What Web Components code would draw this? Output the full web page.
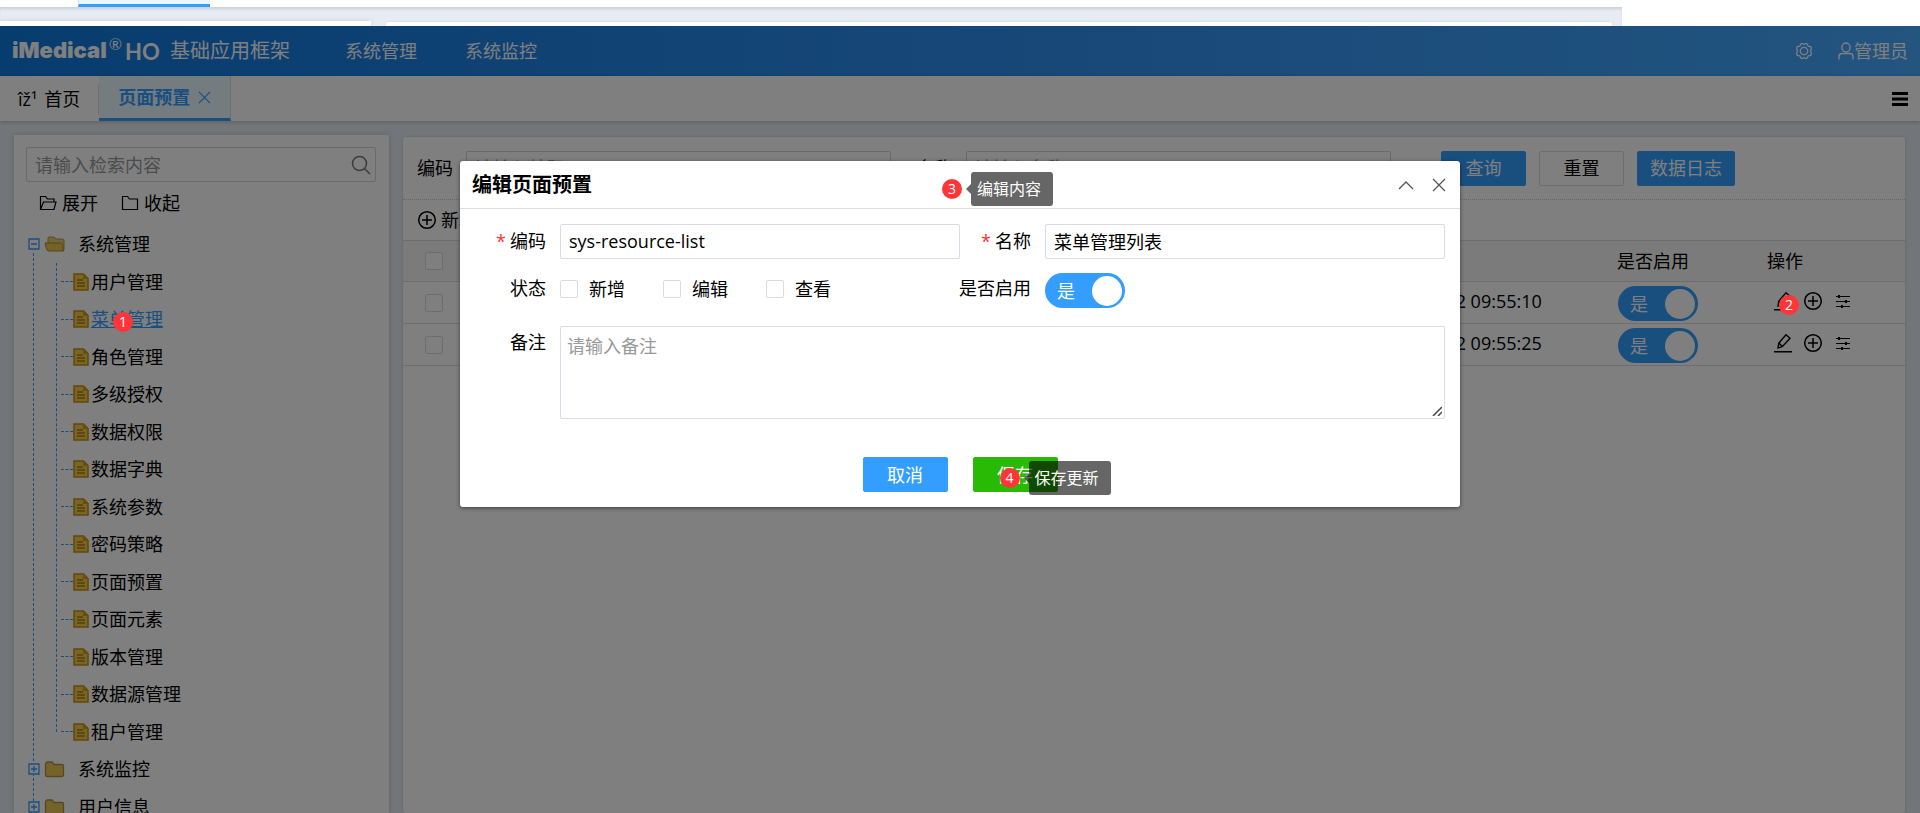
<!DOCTYPE html>
<html lang="zh-CN">
<head>
<meta charset="utf-8">
<title>基础应用框架</title>
<style>
  html, body { height: 100%; margin: 0; }
  body {
    background: #fff; color: #000; overflow: hidden;
    font: 18px/24px "Open Sans", "Noto Sans CJK SC", sans-serif;
  }
</style>
</head>
<body>
<framework-page></framework-page>

<script>
const define = (name, html, setup) => {
  const tpl = document.createElement('template');
  tpl.innerHTML = `<style>*,*::before,*::after{box-sizing:border-box}button,input,textarea{font:inherit;color:inherit;margin:0}a{color:inherit;text-decoration:none}</style>` + html;
  customElements.define(name, class extends HTMLElement {
    constructor() {
      super();
      this.attachShadow({ mode: 'open' }).appendChild(tpl.content.cloneNode(true));
    }
    connectedCallback() { if (setup) setup(this, this.shadowRoot); }
  });
};

/* Icons */
const ICONS = {
  gear: ['0 0 18 18', '<g fill="none" stroke="currentColor" stroke-width="1.3"><path d="M6.2 1.6h1.6l1.2.9 1.2-.9h1.6l1.5 2.6 2.3.4.8 1.4-.5 1.5v3l.5 1.500-.8 1.400-2.300.4-1.500 2.600h-1.600L9 15.500l-1.200.9H6.200l-1.500-2.600-2.300-.4-.8-1.400.5-1.500v-3l-.5-1.500.8-1.400 2.300-.4z"/><circle cx="9" cy="9" r="3.700"/></g>'],
  user: ['0 0 16 18', '<g fill="none" stroke="currentColor" stroke-width="1.400"><rect x="4" y="1" width="8" height="9" rx="4"/><path d="M1 17.500v-3c0-2 1.300-3 3-3h8c1.700 0 3 1 3 3v3"/></g>'],
  menu: ['0 0 18 18', '<path fill="currentColor" d="M1 2h16v3H1zM1 7.500h16v3H1zM1 13h16v3H1z"/>'],
  close: ['0 0 14 14', '<path d="M1 1l12 12M13 1L1 13" fill="none" stroke="currentColor" stroke-width="1.300"/>'],
  up: ['0 0 16 14', '<path d="M1 11l7-7 7 7" fill="none" stroke="currentColor" stroke-width="1.300"/>'],
  search: ['0 0 20 20', '<g fill="none" stroke="currentColor" stroke-width="1.500"><circle cx="8.500" cy="8.500" r="7"/><path d="M13.500 13.500l5.500 5.500"/></g>'],
  folderOpen: ['0 0 18 18', '<path d="M1.500 15.500V2.500h5l2 2.500h6.500v3M1.500 15.500L4.500 8h12.500l-2 7.500z" fill="none" stroke="currentColor" stroke-width="1.200"/>'],
  folder: ['0 0 18 18', '<path d="M1.500 15.500V2.500h5l2 2.500h8v10.500z" fill="none" stroke="currentColor" stroke-width="1.200"/>'],
  plus: ['0 0 20 20', '<g fill="none" stroke="currentColor" stroke-width="1.500"><circle cx="10" cy="10" r="8.300"/><path d="M10 5v10M5 10h10"/></g>'],
  pencil: ['0 0 20 20', '<path d="M1 18.700h18M5 15l.8-5L13 1.800l4 3.400L9.500 13.500zM5.800 10l3.700 3.500" fill="none" stroke="currentColor" stroke-width="1.400"/>'],
  sliders: ['0 0 20 20', '<path d="M3 5.500h14M3 10.500h14M3 15.500h14" stroke="currentColor" stroke-width="1.200"/><path fill="currentColor" d="M5 4h2v3H5zM12 9h2v3h-2zM8 14h2v3H8z"/>'],
  minusBox: ['0 0 12 12', '<path d="M1 1h10v10H1zM3 6h6" fill="none" stroke="#339eff" stroke-width="1.300"/>'],
  plusBox: ['0 0 12 12', '<path d="M1 1h10v10H1zM3 6h6M6 3v6" fill="none" stroke="#339eff" stroke-width="1.300"/>'],
  dirOpen: ['0 0 22 18', '<path d="M4 8V3q0-1 1-1h5l2 2h6q2 0 2 2v9z" fill="#e6cd72" stroke="#b59438"/><path d="M1 8h15.500q1.500 0 2 1.500L19.500 16H5q-2 0-2.500-2z" fill="#e9c44f" stroke="#ad8a32"/>'],
  dirClosed: ['0 0 22 18', '<path d="M1.500 5q0-3 2-3H8l2 2.500h8q1.500 0 1.500 1.500v8.500q0 2-2 2h-14q-2 0-2-2z" fill="#e8c955" stroke="#b18e40" stroke-width="1.300"/>'],
  doc: ['0 0 16 18', '<path d="M1 1h9.500L15 5.500V17H1z" fill="#f3cd45" stroke="#c48f16" stroke-width="1.500"/><path d="M10 1v5h5z" fill="#d49c1b"/><path d="M4 7h6M4 10h8M4 13h8" stroke="#a97c18" stroke-width="1.300"/>']
};
define('ui-icon', `<style>
  :host{display:inline-flex;flex:none;width:18px;height:18px}
  svg{width:100%;height:100%;display:block}
</style><svg aria-hidden="true"></svg>`, (el, root) => {
  const [box, body] = ICONS[el.getAttribute('name')];
  const svg = root.querySelector('svg');
  svg.setAttribute('viewBox', box);
  svg.innerHTML = body;
});

/* Filled or outlined push button */
define('ui-button', `<style>
  :host{display:inline-block;position:relative;min-width:85px}
  button{width:100%;height:35px;padding:0 12px;border:1px solid #339eff;border-radius:2px;background:#339eff;color:#fff;line-height:30px}
  :host([kind=plain]) button{background:#fff;border-color:#ddd;color:#000}
  :host([kind=ok]) button{background:#28ba05;border-color:#28ba05}
</style><button type="button"><slot></slot></button><slot name="mark"></slot>`);

/* On/off switch with a caption inside the track */
define('ui-switch', `<style>
  :host{display:block;width:80px}
  label{display:flex;align-items:center;justify-content:space-between;position:relative;height:35px;padding:0 3px 0 12px;border-radius:18px;background:#339eff;color:#fff}
  input{position:absolute;inset:0;width:100%;height:100%;opacity:0}
  i{width:30px;height:30px;border-radius:50%;background:#fff}
</style><label><slot></slot><input type="checkbox" role="switch" checked><i></i></label>`, (el, root) => {
  root.querySelector('input').setAttribute('aria-label', el.getAttribute('label'));
});

/* Checkbox with optional caption */
define('ui-check', `<style>
  :host{display:inline-block}
  label{display:flex;align-items:center;gap:11px}
  input{appearance:none;width:18px;height:18px;border:1px solid #d9dbe6;border-radius:2px;background:#fff}
</style><label><input type="checkbox"><slot></slot></label>`, (el, root) => {
  if (el.hasAttribute('label')) root.querySelector('input').setAttribute('aria-label', el.getAttribute('label'));
});

/* Numbered step marker, with a hint when text is passed in */
define('step-mark', `<style>
  :host{position:absolute;z-index:20;width:20px;height:20px;font-size:14px;line-height:20px;font-weight:400;color:#fff}
  b{display:block;border-radius:50%;background:#ff3537;text-align:center;font-weight:400}
  span{display:none;position:absolute;left:29px;top:-7px;height:34px;padding:0 12px 0 6px;border-radius:3px;background:rgba(0,0,0,.6);font-size:16px;line-height:34px;white-space:nowrap}
  :host([hint]) span{display:block}
  span::before{content:"";position:absolute;right:100%;top:12px;border:5px solid transparent;border-left:0;border-right-color:rgba(0,0,0,.6)}
</style><b></b><span><slot></slot></span>`, (el, root) => {
  root.querySelector('b').textContent = el.getAttribute('n');
});

/* Lower edge of the page lying behind the application */
define('page-edge', `<style>
  :host{display:block;flex:none;height:26px;background:#fff;overflow:hidden}
  .bar{height:7px;padding-left:78px}
  .tab{width:132px;height:7px;background:#eaf8fe;border-bottom:3px solid #339eff;border-left:1px solid #ddd}
  .body{display:flex;gap:15px;align-items:flex-end;height:19px;max-width:1622px;padding-right:10px;background:#e6ebf4;box-shadow:inset 0 3px 3px -1px rgba(0,0,0,.12)}
  .a{width:371px;height:5px;background:#fff;box-shadow:0 0 5px rgba(0,0,0,.12)}
  .b{flex:1;height:4px;background:#fff;border-radius:2px 2px 0 0;box-shadow:0 0 2px rgba(0,0,0,.15)}
</style><div class="bar"><div class="tab"></div></div><div class="body"><div class="a"></div><div class="b"></div></div>`);

define('app-header', `<style>
  :host{display:flex;align-items:center;height:50px;padding:0 12px;background:linear-gradient(90deg,#0f79de,#2d8ef0 50%,#46aaff);color:#fff}
  .logo{display:flex;align-items:flex-start;width:145px;font:900 22px/28px Inter,sans-serif}
  sup{font:400 16px/16px Lato,sans-serif;margin:0 3px 0 2px}
  .ho{font:700 22px/31px Lato,sans-serif}
  h1{margin:0 0 0 13px;font-size:20px;line-height:26px;font-weight:400}
  nav{display:flex;gap:48px;flex:1;margin-left:55px}
  button{display:flex;align-items:center;padding:0;border:0;background:none}
  .user{margin-left:25px}
  .user ui-icon{width:16px}
</style>
<div class="logo"><span>iMedical</span><sup>®</sup><span class="ho">HO</span></div>
<h1>基础应用框架</h1>
<nav><a href="#manage">系统管理</a><a href="#monitor">系统监控</a></nav>
<button type="button" aria-label="设置"><ui-icon name="gear"></ui-icon></button>
<button type="button" class="user"><ui-icon name="user"></ui-icon>管理员</button>`);

define('app-tabs', `<style>
  :host{display:flex;align-items:center;height:45px;padding-right:11px;background:#fff;box-shadow:0 1px 4px rgba(0,0,0,.2);position:relative}
  a{display:flex;align-items:center}
  .home{height:30px;min-width:99px;gap:7px;padding:0 18px;border-right:1px solid #ddd;line-height:30px}
  .on{height:45px;padding:0 19px;gap:8px;background:#eaf8ff;border-bottom:3px solid #339eff;border-right:1px solid #ddd;color:#339eff;font-weight:700}
  .on ui-icon{width:13px;height:13px}
  button{margin-left:auto;padding:0;border:0;background:none;display:flex}
</style>
<a class="home" href="#home"><span>îž¹</span><span>首页</span></a>
<a class="on" href="#preset">页面预置<ui-icon name="close"></ui-icon></a>
<button type="button" aria-label="菜单"><ui-icon name="menu"></ui-icon></button>`);

define('tree-panel', `<style>
  :host{display:block;width:375px;flex:none;background:#fff;padding:12px 13px 0 12px;box-shadow:0 0 6px rgba(0,0,0,.15);overflow:hidden}
  .search{display:flex;align-items:center;height:35px;border:1px solid #d5d5d5;border-radius:2px;padding:0 4px 0 8px}
  input{flex:1;min-width:0;padding:0;border:0;background:none;outline:0}
  input::placeholder{color:#999}
  .search ui-icon{width:20px;height:20px;color:#777}
  .tools{display:flex;gap:23px;padding:9px 13px 0}
  .tools button{display:flex;align-items:center;gap:5px;padding:0;border:0;background:none}
  ul{list-style:none;margin:0;padding:0}
  .tree{position:relative;margin-top:10px;padding-left:2px}
  .tree::before{content:"";position:absolute;left:7px;top:28px;bottom:0;border-left:1px dashed #339eff}
  .node{display:flex;align-items:center;height:38px;position:relative}
  .node>ui-icon:first-child{width:12px;height:12px;margin-right:4px;background:#fff}
  .node .dir{width:22px;height:18px;margin-right:12px}
  .kids{position:relative;padding-left:33px}
  .kids::before{content:"";position:absolute;left:28px;top:0;bottom:18px;border-left:1px dashed #339eff}
  .kids li{display:flex;align-items:center;height:38px}
  .kids li:nth-child(odd){height:37px}
  .kids li::before{content:"";width:12px;border-top:1px dashed #339eff}
  .kids ui-icon{width:16px;margin-right:2px}
  .kids a{position:relative}
  .kids a.hover{color:#339eff;text-decoration:underline}
  .kids step-mark{left:22px;top:5px}
</style>
<div class="search"><input type="text" placeholder="请输入检索内容" aria-label="检索"><ui-icon name="search"></ui-icon></div>
<div class="tools"><button type="button"><ui-icon name="folderOpen"></ui-icon>展开</button><button type="button"><ui-icon name="folder"></ui-icon>收起</button></div>
<ul class="tree">
  <li><div class="node"><ui-icon name="minusBox"></ui-icon><ui-icon class="dir" name="dirOpen"></ui-icon><a href="#sys">系统管理</a></div><ul class="kids"></ul></li>
  <li><div class="node"><ui-icon name="plusBox"></ui-icon><ui-icon class="dir" name="dirClosed"></ui-icon><a href="#mon">系统监控</a></div></li>
  <li><div class="node"><ui-icon name="plusBox"></ui-icon><ui-icon class="dir" name="dirClosed"></ui-icon><a href="#info">用户信息</a></div></li>
</ul>`, (el, root) => {
  const names = ['用户管理','菜单管理','角色管理','多级授权','数据权限','数据字典','系统参数','密码策略','页面预置','页面元素','版本管理','数据源管理','租户管理'];
  root.querySelector('.kids').innerHTML = names.map((t, i) =>
    `<li><ui-icon name="doc"></ui-icon><a href="#n${i}"${i === 1 ? ' class="hover"' : ''}>${t}${i === 1 ? '<step-mark n="1"></step-mark>' : ''}</a></li>`).join('');
});

define('data-panel', `<style>
  :host{display:block;flex:1;min-width:0;margin-top:2px;background:#fff;border-radius:3px;box-shadow:0 0 3px rgba(0,0,0,.15)}
  .query{display:flex;align-items:center;height:63px;padding:0 14px;border-bottom:1px dotted #ccc}
  .query input{width:425px;height:35px;margin:0 26px 0 13px;padding:0 8px;border:1px solid #d5d5dd;border-radius:2px;background:#fff}
  .query input::placeholder{color:#999}
  .query input.last{margin-right:50px}
  ui-button{margin-right:13px}
  .bar{display:flex;align-items:center;height:40px;padding:0 14px}
  .bar button{display:flex;align-items:center;gap:4px;padding:0;border:0;background:none}
  .bar ui-icon{width:20px;height:20px}
  table{width:100%;table-layout:fixed;border-collapse:collapse}
  th{height:41px;background:#f7f7f7;border-top:1px solid #ddd;font-weight:400}
  th,td{padding:0 10px;text-align:left;border-bottom:1px solid #ddd}
  td{height:42px;padding-bottom:3px}
  .sw{vertical-align:top;padding:4px 0 0 11px}
  .ck{width:62px;padding:0}
  .ck ui-check{display:flex;justify-content:center}
  .ops{display:flex;padding-left:1px}
  .ops button{position:relative;display:flex;justify-content:center;width:30px;padding:0;border:0;background:none}
  .ops ui-icon{width:20px;height:20px}
  .ops step-mark{left:11px;top:4px}
</style>
<div class="query">
  <label for="c">编码</label><input id="c" type="text" placeholder="请输入编码">
  <label for="n">名称</label><input id="n" class="last" type="text" placeholder="请输入名称">
  <ui-button>查询</ui-button><ui-button kind="plain">重置</ui-button><ui-button>数据日志</ui-button>
</div>
<div class="bar"><button type="button"><ui-icon name="plus"></ui-icon>新增</button></div>
<table>
  <colgroup><col style="width:62px"><col><col style="width:245px"><col style="width:150px"><col style="width:148px"></colgroup>
  <thead><tr><th class="ck"><ui-check label="全选"></ui-check></th><th></th><th></th><th>是否启用</th><th>操作</th></tr></thead>
  <tbody></tbody>
</table>`, (el, root) => {
  root.querySelector('tbody').innerHTML = ['2022-04-22 09:55:10', '2022-04-22 09:55:25'].map((t, i) => `<tr>
    <td class="ck"><ui-check label="选择"></ui-check></td><td></td><td>${t}</td>
    <td class="sw"><ui-switch label="是否启用">是</ui-switch></td>
    <td><div class="ops"><button type="button" aria-label="编辑"><ui-icon name="pencil"></ui-icon>${i ? '' : '<step-mark n="2"></step-mark>'}</button>
    <button type="button" aria-label="添加"><ui-icon name="plus"></ui-icon></button>
    <button type="button" aria-label="配置"><ui-icon name="sliders"></ui-icon></button></div></td></tr>`).join('');
});

define('edit-dialog', `<style>
  :host{display:block;width:1000px;max-width:96%;background:#fff;border-radius:3px;box-shadow:0 1px 4px rgba(0,0,0,.5)}
  header{position:relative;display:flex;align-items:center;height:48px;padding:0 14px 0 12px;border-bottom:1px solid #ddd}
  h2{flex:1;margin:0;font-size:20px;line-height:28px;font-weight:700}
  header button{display:flex;padding:0;margin-left:18px;border:0;background:none;color:#555}
  header ui-icon{width:14px;height:14px}
  header ui-icon[name=up]{width:16px}
  header step-mark{left:482px;top:18px}
  form{display:grid;grid-template-columns:85px 1fr 85px 1fr;row-gap:14px;padding:15px 15px 0}
  .lb{display:flex;justify-content:flex-end;padding-right:14px;white-space:nowrap;line-height:31px}
  .req{line-height:34px}
  .req::before{content:"*";color:#f33;margin-right:4px}
  input,textarea{display:block;width:100%;height:35px;padding:0 8px 2px;border:1px solid #d9dbe6;border-radius:2px;background:#fff;outline:0}
  textarea{height:93px;padding:6px;margin-top:4px;line-height:26px;resize:none}
  textarea::placeholder{color:#999}
  .checks{display:flex;gap:38px;align-items:center;height:31px}
  .wide{grid-column:2/-1;position:relative}
  .grip{position:absolute;right:3px;bottom:3px;width:10px;height:10px}
  .top{padding-top:5px}
  footer{display:flex;justify-content:center;gap:25px;padding:38px 0 15px}
  footer step-mark{left:27px;top:11px}
</style>
<header><h2>编辑页面预置</h2>
  <button type="button" aria-label="折叠"><ui-icon name="up"></ui-icon></button>
  <button type="button" aria-label="关闭"><ui-icon name="close"></ui-icon></button>
  <step-mark n="3" hint>编辑内容</step-mark>
</header>
<form>
  <label class="lb req" for="code">编码</label><input id="code" type="text" value="sys-resource-list">
  <label class="lb req" for="name">名称</label><input id="name" type="text" value="菜单管理列表">
  <span class="lb">状态</span>
  <div class="checks"><ui-check>新增</ui-check><ui-check>编辑</ui-check><ui-check>查看</ui-check></div>
  <span class="lb">是否启用</span><ui-switch label="是否启用">是</ui-switch>
  <label class="lb top" for="memo">备注</label>
  <div class="wide"><textarea id="memo" placeholder="请输入备注"></textarea><svg class="grip" viewBox="0 0 10 10" aria-hidden="true"><path d="M1 10L10 1M6 10l4-4" stroke="#444" stroke-width="1.500"/></svg></div>
</form>
<footer><ui-button>取消</ui-button><ui-button kind="ok">保存<step-mark slot="mark" n="4" hint>保存更新</step-mark></ui-button></footer>`);

define('framework-page', `<style>
  :host{display:flex;flex-direction:column;height:100vh;overflow:hidden}
  .app{position:relative;flex:1;min-height:0;display:flex;flex-direction:column;background:#e5ebf2}
  main{display:flex;flex:1;min-height:0;gap:14px;padding:14px 15px 0 14px}
  .mask{position:absolute;inset:0;z-index:10;background:rgba(0,0,0,.5)}
  .layer{position:absolute;inset:0;z-index:11;display:flex;justify-content:center;align-items:flex-start;padding-top:135px;pointer-events:none}
</style>
<page-edge></page-edge>
<div class="app">
  <app-header></app-header>
  <app-tabs></app-tabs>
  <main><tree-panel></tree-panel><data-panel></data-panel></main>
  <div class="mask"></div>
  <div class="layer"><edit-dialog></edit-dialog></div>
</div>`);
</script>
</body>
</html>
